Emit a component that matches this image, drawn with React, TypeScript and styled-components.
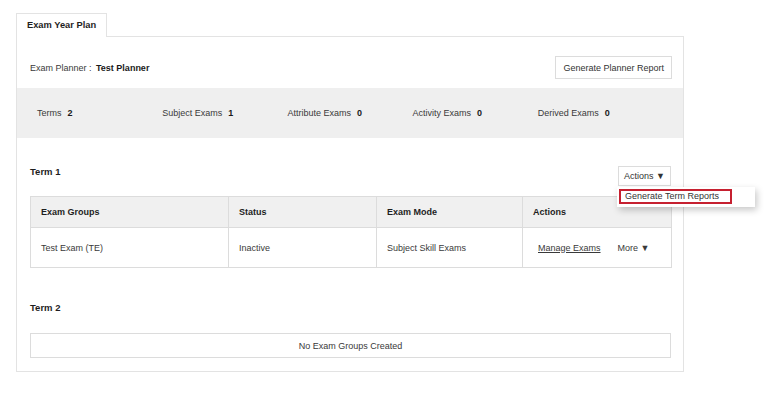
import styled, { createGlobalStyle } from "styled-components"

const GlobalStyle = createGlobalStyle`
  body {
    margin: 0;
    background: #fff;
    font-family: "Liberation Sans", Arial, sans-serif;
    font-size: 9px;
    color: #3a3a3a;
  }
`

const stats = [
  { label: "Terms", value: 2 },
  { label: "Subject Exams", value: 1 },
  { label: "Attribute Exams", value: 0 },
  { label: "Activity Exams", value: 0 },
  { label: "Derived Exams", value: 0 },
]

const columns = [
  { title: "Exam Groups", width: 198 },
  { title: "Status", width: 148 },
  { title: "Exam Mode", width: 146 },
  { title: "Actions", width: 149 },
]

const App: React.FC = () => {
  return (
    <>
      <GlobalStyle />
      <Page>
        <Tab>Exam Year Plan</Tab>
        <Panel>
          <PlannerRow>
            <span>
              Exam Planner : <Strong>Test Planner</Strong>
            </span>
            <Button>Generate Planner Report</Button>
          </PlannerRow>

          <StatsBand>
            {stats.map(s => (
              <Stat key={s.label}>
                {s.label}
                <Strong>{s.value}</Strong>
              </Stat>
            ))}
          </StatsBand>

          <TermSection $top={28}>
            <TermHeader $gap={10}>
              <TermTitle>Term 1</TermTitle>
              <ActionsWrap>
                <Button $small>Actions ▼</Button>
                <Dropdown>
                  <DropItem>Generate Term Reports</DropItem>
                </Dropdown>
              </ActionsWrap>
            </TermHeader>
            <Table>
              <colgroup>
                {columns.map(c => (
                  <Col key={c.title} $w={c.width} />
                ))}
              </colgroup>
              <thead>
                <tr>
                  {columns.map(c => (
                    <Th key={c.title}>{c.title}</Th>
                  ))}
                </tr>
              </thead>
              <tbody>
                <tr>
                  <Td>Test Exam (TE)</Td>
                  <Td>Inactive</Td>
                  <Td>Subject Skill Exams</Td>
                  <Td>
                    <RowActions>
                      <Link href="#">Manage Exams</Link>
                      <span>More ▼</span>
                    </RowActions>
                  </Td>
                </tr>
              </tbody>
            </Table>
          </TermSection>

          <TermSection $top={34}>
            <TermHeader $gap={18}>
              <TermTitle>Term 2</TermTitle>
            </TermHeader>
            <Empty>No Exam Groups Created</Empty>
          </TermSection>
        </Panel>
      </Page>
    </>
  )
}

export default App

const Page = styled.div`
  padding: 13px 0 20px 16px;
  width: 668px;
`
const Tab = styled.div`
  position: relative;
  z-index: 1;
  display: inline-block;
  box-sizing: border-box;
  height: 24px;
  margin-bottom: -1px;
  padding: 0 10px;
  line-height: 23px;
  background: #fff;
  border: 1px solid #e3e3e3;
  border-bottom: none;
  font-weight: bold;
  font-size: 9.3px;
  color: #1e1e1e;
`
const Panel = styled.div`
  border: 1px solid #e3e3e3;
  padding-bottom: 13px;
`
const PlannerRow = styled.div`
  display: flex;
  justify-content: space-between;
  align-items: center;
  padding: 19px 11px 9px 13px;
`
const Strong = styled.b`
  color: #1a1a1a;
  margin-left: 2px;
`
const Button = styled.button<{ $small?: boolean }>`
  box-sizing: border-box;
  height: ${p => (p.$small ? 20 : 23)}px;
  padding: 0 ${p => (p.$small ? 5 : 7)}px;
  background: #fff;
  border: 1px solid #dcdcdc;
  font: inherit;
  color: #333;
  cursor: pointer;
`
const StatsBand = styled.div`
  display: grid;
  grid-template-columns: repeat(5, 1fr);
  align-items: center;
  height: 50px;
  padding: 0 20px;
  background: #efefef;
`
const Stat = styled.div`
  ${Strong} {
    margin-left: 6px;
  }
`
const TermSection = styled.section<{ $top: number }>`
  padding: ${p => p.$top}px 12px 0 13px;
`
const TermHeader = styled.div<{ $gap: number }>`
  display: flex;
  justify-content: space-between;
  align-items: flex-start;
  margin-bottom: ${p => p.$gap}px;
`
const TermTitle = styled.h3`
  margin: -1px 0 0;
  font-size: 9.5px;
  line-height: 14px;
  color: #1e1e1e;
`
const ActionsWrap = styled.div`
  position: relative;
`
const Dropdown = styled.div`
  position: absolute;
  top: 100%;
  left: -1px;
  margin-top: 1px;
  width: 138px;
  padding: 2px 0 3px 2px;
  box-sizing: border-box;
  background: #fff;
  box-shadow: 2px 3px 7px rgba(0, 0, 0, 0.22);
  z-index: 2;
`
const DropItem = styled.div`
  box-sizing: border-box;
  width: 113px;
  height: 15px;
  padding-left: 4px;
  line-height: 11px;
  border: 2px solid #c62030;
  color: #333;
  white-space: nowrap;
`
const Table = styled.table`
  width: 100%;
  border-collapse: collapse;
  table-layout: fixed;
  border: 1px solid #dcdcdc;
`
const Col = styled.col<{ $w: number }>`
  width: ${p => p.$w}px;
`
const Th = styled.th`
  height: 30px;
  padding: 0 10px;
  text-align: left;
  background: #f0f0f0;
  border: 1px solid #dcdcdc;
  color: #1e1e1e;
`
const Td = styled.td`
  height: 39px;
  padding: 0 10px;
  border: 1px solid #dcdcdc;
`
const RowActions = styled.div`
  display: flex;
  gap: 17px;
  padding-left: 5px;
`
const Link = styled.a`
  color: #3a3a3a;
  text-decoration: underline;
`
const Empty = styled.div`
  box-sizing: border-box;
  height: 25px;
  display: flex;
  align-items: center;
  justify-content: center;
  border: 1px solid #dcdcdc;
`
